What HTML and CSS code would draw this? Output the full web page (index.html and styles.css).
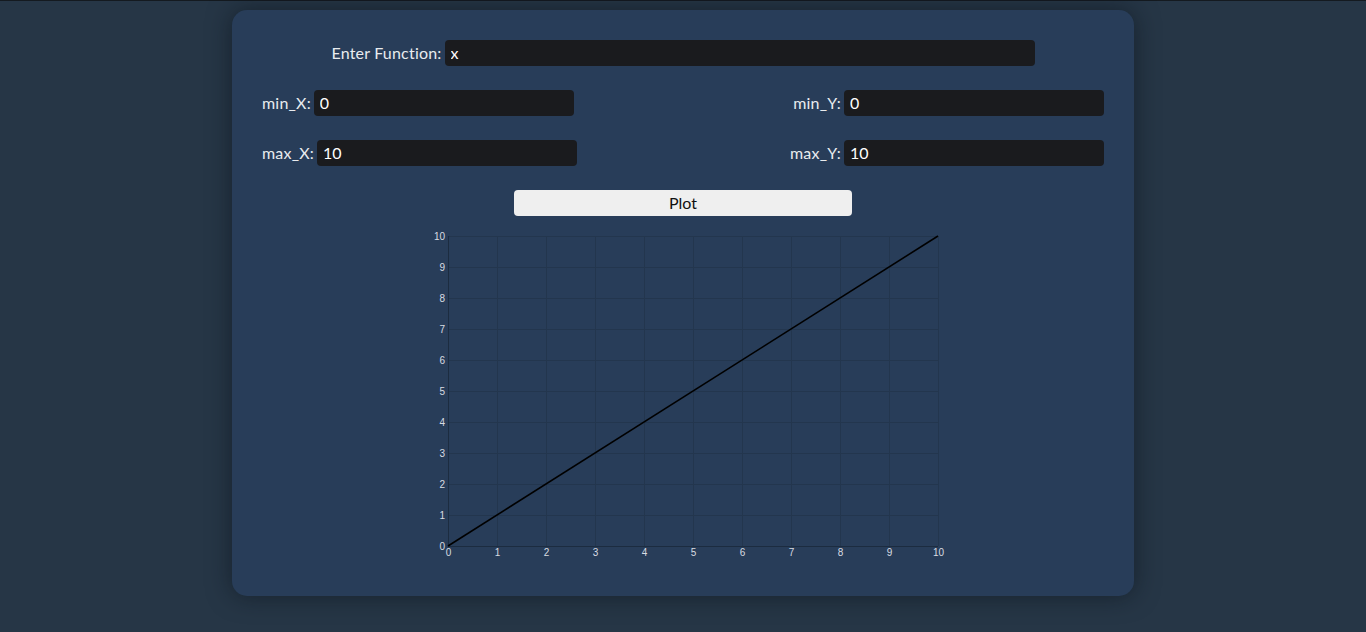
FILE: index.html
```html
<!DOCTYPE html>
<html>
<head>
<meta charset="utf-8">
<link rel="stylesheet" href="styles.css">
</head>
<body>
<div class="topline"></div>
<main class="card">
  <div class="row row-center">
    <label class="lbl">Enter Function:</label>
    <input class="field field-fn" type="text" value="x">
  </div>
  <div class="row row-split">
    <div class="pair"><label class="lbl">min_X:</label><input class="field field-num" type="text" value="0"></div>
    <div class="pair"><label class="lbl">min_Y:</label><input class="field field-num" type="text" value="0"></div>
  </div>
  <div class="row row-split">
    <div class="pair"><label class="lbl">max_X:</label><input class="field field-num" type="text" value="10"></div>
    <div class="pair"><label class="lbl">max_Y:</label><input class="field field-num" type="text" value="10"></div>
  </div>
  <div class="row row-center">
    <button class="plot-btn">Plot</button>
  </div>
  <div class="chart-wrap">
    <svg class="chart" width="520" height="332" viewBox="0 0 520 332">
      <g class="grid" stroke="#23364e" stroke-width="1">
        <line x1="74.5" y1="8" x2="74.5" y2="318"/>
        <line x1="123.5" y1="8" x2="123.5" y2="318"/>
        <line x1="172.5" y1="8" x2="172.5" y2="318"/>
        <line x1="221.5" y1="8" x2="221.5" y2="318"/>
        <line x1="270.5" y1="8" x2="270.5" y2="318"/>
        <line x1="319.5" y1="8" x2="319.5" y2="318"/>
        <line x1="368.5" y1="8" x2="368.5" y2="318"/>
        <line x1="417.5" y1="8" x2="417.5" y2="318"/>
        <line x1="466.5" y1="8" x2="466.5" y2="318"/>
        <line x1="515.5" y1="8" x2="515.5" y2="318"/>
        <line x1="25" y1="8.5" x2="515" y2="8.5"/>
        <line x1="25" y1="39.5" x2="515" y2="39.5"/>
        <line x1="25" y1="70.5" x2="515" y2="70.5"/>
        <line x1="25" y1="101.5" x2="515" y2="101.5"/>
        <line x1="25" y1="132.5" x2="515" y2="132.5"/>
        <line x1="25" y1="163.5" x2="515" y2="163.5"/>
        <line x1="25" y1="194.5" x2="515" y2="194.5"/>
        <line x1="25" y1="225.5" x2="515" y2="225.5"/>
        <line x1="25" y1="256.5" x2="515" y2="256.5"/>
        <line x1="25" y1="287.5" x2="515" y2="287.5"/>
      </g>
      <g stroke="#1c2c40" stroke-width="1">
        <line x1="25.5" y1="8" x2="25.5" y2="318"/>
        <line x1="25" y1="318.5" x2="515" y2="318.5"/>
      </g>
      <line x1="25" y1="318" x2="515" y2="8" stroke="#000" stroke-width="1.6"/>
      <g class="ylab" text-anchor="end">
        <text x="22" y="12">10</text>
        <text x="22" y="43">9</text>
        <text x="22" y="74">8</text>
        <text x="22" y="105">7</text>
        <text x="22" y="136">6</text>
        <text x="22" y="167">5</text>
        <text x="22" y="198">4</text>
        <text x="22" y="229">3</text>
        <text x="22" y="260">2</text>
        <text x="22" y="291">1</text>
        <text x="22" y="322">0</text>
      </g>
      <g class="xlab" text-anchor="middle">
        <text x="25.5" y="328">0</text>
        <text x="74.5" y="328">1</text>
        <text x="123.5" y="328">2</text>
        <text x="172.5" y="328">3</text>
        <text x="221.5" y="328">4</text>
        <text x="270.5" y="328">5</text>
        <text x="319.5" y="328">6</text>
        <text x="368.5" y="328">7</text>
        <text x="417.5" y="328">8</text>
        <text x="466.5" y="328">9</text>
        <text x="515.5" y="328">10</text>
      </g>
    </svg>
  </div>
</main>
</body>
</html>
```

FILE: styles.css
```css
html, body {
  margin: 0;
  padding: 0;
}
body {
  background: #263646;
  min-height: 632px;
  font-family: "Lato", "Open Sans", sans-serif;
  overflow: hidden;
}
.topline {
  height: 1px;
  background: #141a20;
}
.card {
  width: 902px;
  height: 586px;
  margin: 9px auto 0;
  box-sizing: border-box;
  background: #283d59;
  border-radius: 15px;
  box-shadow: 0 0 24px rgba(10, 16, 24, 0.55);
  padding: 30px 30px 0;
  display: flex;
  flex-direction: column;
  gap: 24px;
}
.row {
  display: flex;
  align-items: center;
  height: 26px;
}
.row-center {
  justify-content: center;
}
.row-split {
  justify-content: space-between;
}
.pair {
  display: flex;
  align-items: center;
}
.lbl {
  color: #e9ecef;
  font-size: 16px;
  letter-spacing: 0.2px;
  margin-right: 3px;
  padding-bottom: 2px;
  white-space: nowrap;
}
.field {
  height: 26px;
  box-sizing: border-box;
  border: none;
  outline: none;
  border-radius: 4px;
  background: #1a1b1e;
  color: #ffffff;
  font-family: inherit;
  font-size: 16px;
  padding: 0 6px 2px;
}
.field-fn {
  width: 590px;
}
.field-num {
  width: 260px;
}
.plot-btn {
  width: 338px;
  height: 26px;
  border: none;
  border-radius: 4px;
  background: #efefef;
  color: #111;
  font-family: inherit;
  font-size: 16px;
  padding: 0 0 2px;
}
.chart-wrap {
  display: flex;
  justify-content: center;
  margin-top: -12px;
}
.chart {
  display: block;
  overflow: visible;
}
.chart text {
  font-family: "Liberation Sans", Arial, sans-serif;
  font-size: 10px;
  fill: #d8dce2;
}
```
